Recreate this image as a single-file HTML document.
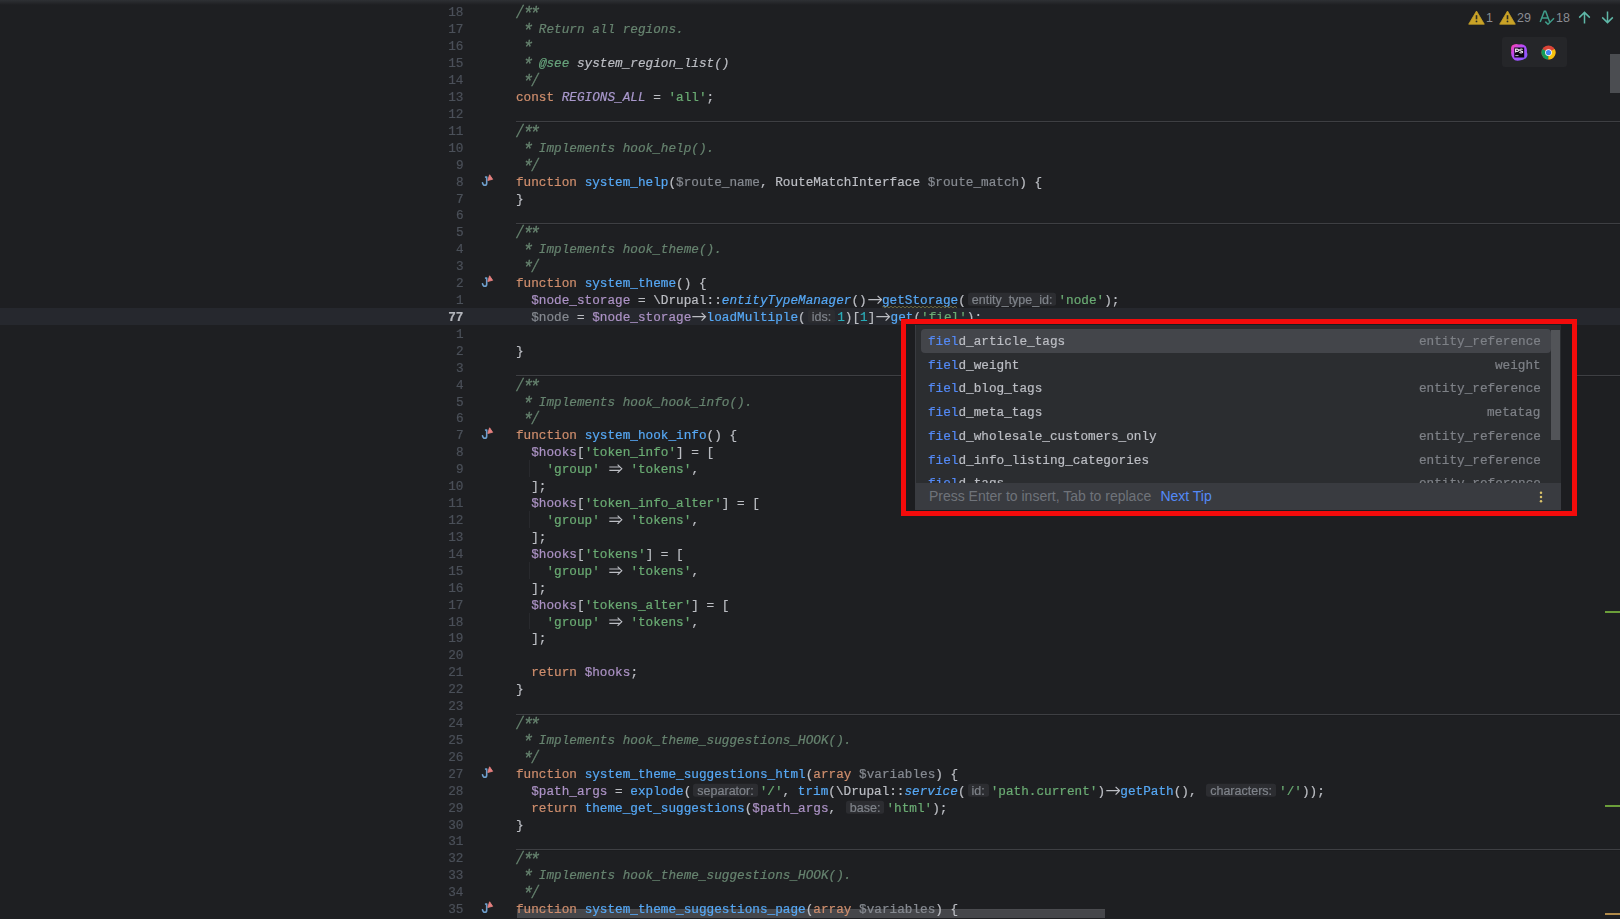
<!DOCTYPE html>
<html><head><meta charset="utf-8"><style>
*{box-sizing:border-box}
html,body{margin:0;padding:0}
body{width:1620px;height:919px;overflow:hidden;background:#1e1f22;position:relative;font-family:"Liberation Mono",monospace;}
.topsh{position:absolute;left:0;top:0;width:1620px;height:5px;background:linear-gradient(#2e3034,#1e1f22)}
.cur{position:absolute;left:0;width:1620px;height:16.92px;background:#26282e}
.ln{position:absolute;left:400px;width:63.5px;text-align:right;font-size:12.717px;line-height:16.92px;height:16.92px;color:#4b5059;white-space:pre;-webkit-text-stroke:0.2px currentColor;transform:translateY(1.8px) scaleY(1.06);transform-origin:0 11.84px;will-change:transform}
.lc{color:#b4b6bc;font-weight:bold}
.code{position:absolute;left:516.0px;font-size:12.717px;line-height:16.92px;height:16.92px;color:#bcbec4;white-space:pre;-webkit-text-stroke:0.2px currentColor;transform:translateY(1.8px) scaleY(1.06);transform-origin:0 11.84px;will-change:transform}
.sep{position:absolute;left:516.0px;width:1104.0px;height:1px;background:#3e3f43;box-shadow:0 1px 0 #1b1c1f}
.ig{position:absolute;left:528.76px;width:1px;height:16.92px;background:#28292d}
.gic{position:absolute;left:480px;height:16.92px;width:16px}
.gi{position:absolute;left:0;top:0}
.k{color:#cf8e6d}
.ast{display:inline-block;width:7.63px;text-align:center;transform-origin:50% 4.54px;transform:translateY(0.5px) scale(1.4)}
.sl{display:inline-block;width:7.63px;text-align:center;transform-origin:50% 6.52px;transform:translateY(0.55px) scaleY(1.3)}
.f{color:#56a8f5}
.fi{color:#56a8f5;font-style:italic}
.s{color:#6aab73}
.n{color:#2aacb8}
.d{color:#66836f;font-style:italic}
.dt{color:#67a37c;font-style:italic}
.dr{color:#bcbec4;font-style:italic}
.c{color:#a998cc;font-style:italic}
.v{color:#ad93c6}
.u{color:#868a91}
.ar{display:inline-block;width:15.26px;height:16.92px;vertical-align:top;position:relative}
.ar b{position:absolute;left:0;top:0;width:100%;height:16.92px;transform-origin:0 11.84px;transform:scaleY(0.94340)}
.ar svg{position:absolute;left:0;top:0}
.hint{display:inline-block;height:16.92px;vertical-align:top;position:relative;padding:0 2px}
.hint i{display:block;margin-top:0.4px;height:12.9px;background:#2c2d31;border-radius:2.5px;font-style:normal;font-family:"Liberation Sans",sans-serif;font-size:12.5px;line-height:14.3px;padding:0 4px;color:#7f838a;transform-origin:0 11.44px;transform:scaleY(0.94340)}
.redbox{position:absolute;left:901px;top:318.6px;width:675.5px;height:197.4px;border:5px solid #f40b0b}
.popshadow{position:absolute;left:906px;top:323.6px;width:665.5px;height:187.4px;background:#1c1d20}
.popup{position:absolute;left:915.4px;top:324.5px;width:645.6px;height:185.2px;background:#2b2d30;overflow:hidden;border-left:1px solid #393b40}
.plist{position:absolute;left:0;top:0;right:0;height:158px;overflow:hidden}
.psel{position:absolute;left:4.6px;top:4.5px;width:630px;height:23.8px;background:#43454a;border-radius:4px}
.pit{position:absolute;left:11.5px;height:23.7px;line-height:23.7px;font-size:12.717px;color:#bcbec4;white-space:pre;-webkit-text-stroke:0.2px currentColor;transform:translateY(1.5px) scaleY(1.06);transform-origin:0 15.22px;will-change:transform}
.pm{color:#548af7}
.pty{position:absolute;right:20.5px;height:23.7px;line-height:23.7px;font-size:12.717px;color:#7e8187;white-space:pre;-webkit-text-stroke:0.2px currentColor;transform:translateY(1.5px) scaleY(1.06);transform-origin:0 15.22px;will-change:transform}
.psb{position:absolute;left:634.6px;top:5.5px;width:9.5px;height:109.5px;background:#525458}
.pfoot{position:absolute;left:0;top:158px;right:0;bottom:0;background:#393b40;font-family:"Liberation Sans",sans-serif;font-size:14px;line-height:27px}
.pft{position:absolute;left:12.5px;top:0;color:#6f737a}
.pnt{position:absolute;left:244px;top:0;color:#548af7}
.pdots{position:absolute;left:622px;top:8px}
.stn{position:absolute;top:9.5px;font-family:"Liberation Sans",sans-serif;font-size:12.5px;line-height:17px;color:#8a8d93}
.brbox{position:absolute;left:1502px;top:37px;width:65px;height:30px;background:#252629;border-radius:3px}
</style></head>
<body>
<div class="topsh"></div>
<div style="position:absolute;left:516.8px;top:908.8px;width:588.4px;height:9px;background:#45464a;border-top:1px solid #4b4c50"></div><div class="sep" style="top:121.34px"></div><div class="sep" style="top:222.86px"></div><div class="sep" style="top:375.14px"></div><div class="sep" style="top:713.54px"></div><div class="sep" style="top:848.90px"></div><div class="ig" style="top:460.24px"></div><div class="ig" style="top:511.00px"></div><div class="ig" style="top:561.76px"></div><div class="ig" style="top:612.52px"></div><div class="ln" style="top:3.40px">18</div><div class="code" style="top:3.40px"><span class="d"><span class="sl">/</span><span class="ast">*</span><span class="ast">*</span></span></div><div class="ln" style="top:20.32px">17</div><div class="code" style="top:20.32px"><span class="d"> <span class="ast">*</span> Return all regions.</span></div><div class="ln" style="top:37.24px">16</div><div class="code" style="top:37.24px"><span class="d"> <span class="ast">*</span></span></div><div class="ln" style="top:54.16px">15</div><div class="code" style="top:54.16px"><span class="d"> <span class="ast">*</span> </span><span class="dt">@see</span><span class="d"> </span><span class="dr">system_region_list()</span></div><div class="ln" style="top:71.08px">14</div><div class="code" style="top:71.08px"><span class="d"> <span class="ast">*</span><span class="sl">/</span></span></div><div class="ln" style="top:88.00px">13</div><div class="code" style="top:88.00px"><span class="k">const</span> <span class="c">REGIONS_ALL</span> = <span class="s">'all'</span>;</div><div class="ln" style="top:104.92px">12</div><div class="ln" style="top:121.84px">11</div><div class="code" style="top:121.84px"><span class="d"><span class="sl">/</span><span class="ast">*</span><span class="ast">*</span></span></div><div class="ln" style="top:138.76px">10</div><div class="code" style="top:138.76px"><span class="d"> <span class="ast">*</span> Implements hook_help().</span></div><div class="ln" style="top:155.68px">9</div><div class="code" style="top:155.68px"><span class="d"> <span class="ast">*</span><span class="sl">/</span></span></div><div class="ln" style="top:172.60px">8</div><div class="gic" style="top:172.60px"><svg class="gi" width="16" height="17" viewBox="0 0 16 17"><path d="M5.6 4.1H6.7V10.2Q6.7 12.3 4.7 12.3Q3.1 12.3 2.5 9.8" fill="none" stroke="#6f9fcc" stroke-width="1.6" stroke-linecap="round" stroke-linejoin="round"/><path d="M9.6 1.8L12.6 6.3L7.8 7.4Z" fill="#e5807f" stroke="#e5807f" stroke-width="0.9" stroke-linejoin="round"/></svg></div><div class="code" style="top:172.60px"><span class="k">function</span> <span class="f">system_help</span>(<span class="u">$route_name</span>, RouteMatchInterface <span class="u">$route_match</span>) {</div><div class="ln" style="top:189.52px">7</div><div class="code" style="top:189.52px">}</div><div class="ln" style="top:206.44px">6</div><div class="ln" style="top:223.36px">5</div><div class="code" style="top:223.36px"><span class="d"><span class="sl">/</span><span class="ast">*</span><span class="ast">*</span></span></div><div class="ln" style="top:240.28px">4</div><div class="code" style="top:240.28px"><span class="d"> <span class="ast">*</span> Implements hook_theme().</span></div><div class="ln" style="top:257.20px">3</div><div class="code" style="top:257.20px"><span class="d"> <span class="ast">*</span><span class="sl">/</span></span></div><div class="ln" style="top:274.12px">2</div><div class="gic" style="top:274.12px"><svg class="gi" width="16" height="17" viewBox="0 0 16 17"><path d="M5.6 4.1H6.7V10.2Q6.7 12.3 4.7 12.3Q3.1 12.3 2.5 9.8" fill="none" stroke="#6f9fcc" stroke-width="1.6" stroke-linecap="round" stroke-linejoin="round"/><path d="M9.6 1.8L12.6 6.3L7.8 7.4Z" fill="#e5807f" stroke="#e5807f" stroke-width="0.9" stroke-linejoin="round"/></svg></div><div class="code" style="top:274.12px"><span class="k">function</span> <span class="f">system_theme</span>() {</div><div class="ln" style="top:291.04px">1</div><div class="code" style="top:291.04px">  <span class="v">$node_storage</span> = \Drupal::<span class="fi">entityTypeManager</span>()<span class="ar"><b><svg width="15.24" height="16" viewBox="0 0 15.24 16"><path d="M1.3 6.9H14.4M10.6 3L14.5 6.9L10.6 10.8" fill="none" stroke="#bcbec4" stroke-width="1.2"/></svg></b></span><span class="f wv">getStorage</span>(<span class="hint"><i>entity_type_id:</i></span><span class="s">'node'</span>);</div><div class="cur" style="top:307.96px"></div><div class="ln lc" style="top:307.96px">77</div><div class="code" style="top:307.96px">  <span class="u">$node</span> = <span class="v">$node_storage</span><span class="ar"><b><svg width="15.24" height="16" viewBox="0 0 15.24 16"><path d="M1.3 6.9H14.4M10.6 3L14.5 6.9L10.6 10.8" fill="none" stroke="#bcbec4" stroke-width="1.2"/></svg></b></span><span class="f">loadMultiple</span>(<span class="hint"><i>ids:</i></span><span class="n">1</span>)[<span class="n">1</span>]<span class="ar"><b><svg width="15.24" height="16" viewBox="0 0 15.24 16"><path d="M1.3 6.9H14.4M10.6 3L14.5 6.9L10.6 10.8" fill="none" stroke="#bcbec4" stroke-width="1.2"/></svg></b></span><span class="f">get</span>(<span class="s">'fiel'</span>);</div><div class="ln" style="top:324.88px">1</div><div class="ln" style="top:341.80px">2</div><div class="code" style="top:341.80px">}</div><div class="ln" style="top:358.72px">3</div><div class="ln" style="top:375.64px">4</div><div class="code" style="top:375.64px"><span class="d"><span class="sl">/</span><span class="ast">*</span><span class="ast">*</span></span></div><div class="ln" style="top:392.56px">5</div><div class="code" style="top:392.56px"><span class="d"> <span class="ast">*</span> Implements hook_hook_info().</span></div><div class="ln" style="top:409.48px">6</div><div class="code" style="top:409.48px"><span class="d"> <span class="ast">*</span><span class="sl">/</span></span></div><div class="ln" style="top:426.40px">7</div><div class="gic" style="top:426.40px"><svg class="gi" width="16" height="17" viewBox="0 0 16 17"><path d="M5.6 4.1H6.7V10.2Q6.7 12.3 4.7 12.3Q3.1 12.3 2.5 9.8" fill="none" stroke="#6f9fcc" stroke-width="1.6" stroke-linecap="round" stroke-linejoin="round"/><path d="M9.6 1.8L12.6 6.3L7.8 7.4Z" fill="#e5807f" stroke="#e5807f" stroke-width="0.9" stroke-linejoin="round"/></svg></div><div class="code" style="top:426.40px"><span class="k">function</span> <span class="f">system_hook_info</span>() {</div><div class="ln" style="top:443.32px">8</div><div class="code" style="top:443.32px">  <span class="v">$hooks</span>[<span class="s">'token_info'</span>] = [</div><div class="ln" style="top:460.24px">9</div><div class="code" style="top:460.24px">    <span class="s">'group'</span> <span class="ar"><b><svg width="15.24" height="16" viewBox="0 0 15.24 16"><path d="M1.3 5.2H11.8M1.3 8.6H11.8M9.6 2.8L13.8 6.9L9.6 11" fill="none" stroke="#bcbec4" stroke-width="1.15"/></svg></b></span> <span class="s">'tokens'</span>,</div><div class="ln" style="top:477.16px">10</div><div class="code" style="top:477.16px">  ];</div><div class="ln" style="top:494.08px">11</div><div class="code" style="top:494.08px">  <span class="v">$hooks</span>[<span class="s">'token_info_alter'</span>] = [</div><div class="ln" style="top:511.00px">12</div><div class="code" style="top:511.00px">    <span class="s">'group'</span> <span class="ar"><b><svg width="15.24" height="16" viewBox="0 0 15.24 16"><path d="M1.3 5.2H11.8M1.3 8.6H11.8M9.6 2.8L13.8 6.9L9.6 11" fill="none" stroke="#bcbec4" stroke-width="1.15"/></svg></b></span> <span class="s">'tokens'</span>,</div><div class="ln" style="top:527.92px">13</div><div class="code" style="top:527.92px">  ];</div><div class="ln" style="top:544.84px">14</div><div class="code" style="top:544.84px">  <span class="v">$hooks</span>[<span class="s">'tokens'</span>] = [</div><div class="ln" style="top:561.76px">15</div><div class="code" style="top:561.76px">    <span class="s">'group'</span> <span class="ar"><b><svg width="15.24" height="16" viewBox="0 0 15.24 16"><path d="M1.3 5.2H11.8M1.3 8.6H11.8M9.6 2.8L13.8 6.9L9.6 11" fill="none" stroke="#bcbec4" stroke-width="1.15"/></svg></b></span> <span class="s">'tokens'</span>,</div><div class="ln" style="top:578.68px">16</div><div class="code" style="top:578.68px">  ];</div><div class="ln" style="top:595.60px">17</div><div class="code" style="top:595.60px">  <span class="v">$hooks</span>[<span class="s">'tokens_alter'</span>] = [</div><div class="ln" style="top:612.52px">18</div><div class="code" style="top:612.52px">    <span class="s">'group'</span> <span class="ar"><b><svg width="15.24" height="16" viewBox="0 0 15.24 16"><path d="M1.3 5.2H11.8M1.3 8.6H11.8M9.6 2.8L13.8 6.9L9.6 11" fill="none" stroke="#bcbec4" stroke-width="1.15"/></svg></b></span> <span class="s">'tokens'</span>,</div><div class="ln" style="top:629.44px">19</div><div class="code" style="top:629.44px">  ];</div><div class="ln" style="top:646.36px">20</div><div class="ln" style="top:663.28px">21</div><div class="code" style="top:663.28px">  <span class="k">return</span> <span class="v">$hooks</span>;</div><div class="ln" style="top:680.20px">22</div><div class="code" style="top:680.20px">}</div><div class="ln" style="top:697.12px">23</div><div class="ln" style="top:714.04px">24</div><div class="code" style="top:714.04px"><span class="d"><span class="sl">/</span><span class="ast">*</span><span class="ast">*</span></span></div><div class="ln" style="top:730.96px">25</div><div class="code" style="top:730.96px"><span class="d"> <span class="ast">*</span> Implements hook_theme_suggestions_HOOK().</span></div><div class="ln" style="top:747.88px">26</div><div class="code" style="top:747.88px"><span class="d"> <span class="ast">*</span><span class="sl">/</span></span></div><div class="ln" style="top:764.80px">27</div><div class="gic" style="top:764.80px"><svg class="gi" width="16" height="17" viewBox="0 0 16 17"><path d="M5.6 4.1H6.7V10.2Q6.7 12.3 4.7 12.3Q3.1 12.3 2.5 9.8" fill="none" stroke="#6f9fcc" stroke-width="1.6" stroke-linecap="round" stroke-linejoin="round"/><path d="M9.6 1.8L12.6 6.3L7.8 7.4Z" fill="#e5807f" stroke="#e5807f" stroke-width="0.9" stroke-linejoin="round"/></svg></div><div class="code" style="top:764.80px"><span class="k">function</span> <span class="f">system_theme_suggestions_html</span>(<span class="k">array</span> <span class="u">$variables</span>) {</div><div class="ln" style="top:781.72px">28</div><div class="code" style="top:781.72px">  <span class="v">$path_args</span> = <span class="f">explode</span>(<span class="hint"><i>separator:</i></span><span class="s">'/'</span>, <span class="f">trim</span>(\Drupal::<span class="fi">service</span>(<span class="hint"><i>id:</i></span><span class="s">'path.current'</span>)<span class="ar"><b><svg width="15.24" height="16" viewBox="0 0 15.24 16"><path d="M1.3 6.9H14.4M10.6 3L14.5 6.9L10.6 10.8" fill="none" stroke="#bcbec4" stroke-width="1.2"/></svg></b></span><span class="f">getPath</span>(), <span class="hint" style="padding-right:3px"><i>characters:</i></span><span class="s">'/'</span>));</div><div class="ln" style="top:798.64px">29</div><div class="code" style="top:798.64px">  <span class="k">return</span> <span class="f">theme_get_suggestions</span>(<span class="v">$path_args</span>, <span class="hint"><i>base:</i></span><span class="s">'html'</span>);</div><div class="ln" style="top:815.56px">30</div><div class="code" style="top:815.56px">}</div><div class="ln" style="top:832.48px">31</div><div class="ln" style="top:849.40px">32</div><div class="code" style="top:849.40px"><span class="d"><span class="sl">/</span><span class="ast">*</span><span class="ast">*</span></span></div><div class="ln" style="top:866.32px">33</div><div class="code" style="top:866.32px"><span class="d"> <span class="ast">*</span> Implements hook_theme_suggestions_HOOK().</span></div><div class="ln" style="top:883.24px">34</div><div class="code" style="top:883.24px"><span class="d"> <span class="ast">*</span><span class="sl">/</span></span></div><div class="ln" style="top:900.16px">35</div><div class="gic" style="top:900.16px"><svg class="gi" width="16" height="17" viewBox="0 0 16 17"><path d="M5.6 4.1H6.7V10.2Q6.7 12.3 4.7 12.3Q3.1 12.3 2.5 9.8" fill="none" stroke="#6f9fcc" stroke-width="1.6" stroke-linecap="round" stroke-linejoin="round"/><path d="M9.6 1.8L12.6 6.3L7.8 7.4Z" fill="#e5807f" stroke="#e5807f" stroke-width="0.9" stroke-linejoin="round"/></svg></div><div class="code" style="top:900.16px"><span class="k">function</span> <span class="f">system_theme_suggestions_page</span>(<span class="k">array</span> <span class="u">$variables</span>) {</div><svg style="position:absolute;left:882.24px;top:305.84px" width="76.3" height="3" viewBox="0 0 76.3 3"><path d="M0 1.5 L1.0 0.3 L3.0 1.8 L5.0 0.3 L7.0 1.8 L9.0 0.3 L11.0 1.8 L13.0 0.3 L15.0 1.8 L17.0 0.3 L19.0 1.8 L21.0 0.3 L23.0 1.8 L25.0 0.3 L27.0 1.8 L29.0 0.3 L31.0 1.8 L33.0 0.3 L35.0 1.8 L37.0 0.3 L39.0 1.8 L41.0 0.3 L43.0 1.8 L45.0 0.3 L47.0 1.8 L49.0 0.3 L51.0 1.8 L53.0 0.3 L55.0 1.8 L57.0 0.3 L59.0 1.8 L61.0 0.3 L63.0 1.8 L65.0 0.3 L67.0 1.8 L69.0 0.3 L71.0 1.8 L73.0 0.3 L75.0 1.8" fill="none" stroke="#857d4a" stroke-width="0.8"/></svg><div class="redbox"></div><div class="popshadow"></div><div class="popup"><div class="plist"><div class="psel"></div><div class="pit" style="top:4.50px"><span class="pm">fiel</span>d_article_tags</div><div class="pty" style="top:4.50px">entity_reference</div><div class="pit" style="top:28.20px"><span class="pm">fiel</span>d_weight</div><div class="pty" style="top:28.20px">weight</div><div class="pit" style="top:51.90px"><span class="pm">fiel</span>d_blog_tags</div><div class="pty" style="top:51.90px">entity_reference</div><div class="pit" style="top:75.60px"><span class="pm">fiel</span>d_meta_tags</div><div class="pty" style="top:75.60px">metatag</div><div class="pit" style="top:99.30px"><span class="pm">fiel</span>d_wholesale_customers_only</div><div class="pty" style="top:99.30px">entity_reference</div><div class="pit" style="top:123.00px"><span class="pm">fiel</span>d_info_listing_categories</div><div class="pty" style="top:123.00px">entity_reference</div><div class="pit" style="top:146.70px"><span class="pm">fiel</span>d_tags</div><div class="pty" style="top:146.70px">entity_reference</div><div class="psb"></div></div><div class="pfoot"><span class="pft">Press Enter to insert, Tab to replace</span><span class="pnt">Next Tip</span><svg class="pdots" width="6" height="12" viewBox="0 0 6 12"><circle cx="3" cy="1.8" r="1.25" fill="#d9c26a"/><circle cx="3" cy="6" r="1.25" fill="#d9c26a"/><circle cx="3" cy="10.2" r="1.25" fill="#d9c26a"/></svg></div></div><svg style="position:absolute;left:1468px;top:10px" width="17" height="15" viewBox="0 0 17 15"><path d="M8.5 1L16.3 14.2H0.7Z" fill="#c9a227" stroke="#c9a227" stroke-width="0.8" stroke-linejoin="round"/><path d="M8.5 5.2V9.3" stroke="#2b2b22" stroke-width="1.6"/><circle cx="8.5" cy="11.4" r="0.9" fill="#2b2b22"/></svg><div class="stn" style="left:1486px">1</div><svg style="position:absolute;left:1499px;top:10px" width="17" height="15" viewBox="0 0 17 15"><path d="M8.5 1L16.3 14.2H0.7Z" fill="#c9a227" stroke="#c9a227" stroke-width="0.8" stroke-linejoin="round"/><path d="M8.5 5.2V9.3" stroke="#2b2b22" stroke-width="1.6"/><circle cx="8.5" cy="11.4" r="0.9" fill="#2b2b22"/></svg><div class="stn" style="left:1517px">29</div><svg style="position:absolute;left:1539px;top:9px" width="16" height="17" viewBox="0 0 16 17"><path d="M1.2 13L5.3 2.2H6.6L10.7 13M2.8 9H9.1" fill="none" stroke="#3e9d8a" stroke-width="1.5"/><path d="M6.3 12.6L9 15.2L15 9.2" fill="none" stroke="#3e9d8a" stroke-width="1.5"/></svg><div class="stn" style="left:1556px">18</div><svg style="position:absolute;left:1578px;top:11px" width="13" height="13" viewBox="0 0 13 13"><path d="M6.5 12.5V1.5M1.2 6.6L6.5 1.4L11.8 6.6" fill="none" stroke="#5fb8a8" stroke-width="1.5"/></svg><svg style="position:absolute;left:1601px;top:11px" width="13" height="13" viewBox="0 0 13 13"><path d="M6.5 0.5V11.5M1.2 6.4L6.5 11.6L11.8 6.4" fill="none" stroke="#5fb8a8" stroke-width="1.5"/></svg><div class="brbox"></div><svg style="position:absolute;left:1510px;top:43px" width="19" height="19" viewBox="0 0 19 19"><defs><linearGradient id="psg" x1="0" y1="0" x2="1" y2="1"><stop offset="0" stop-color="#ff3fa8"/><stop offset="0.45" stop-color="#b44dff"/><stop offset="1" stop-color="#7d5cff"/></linearGradient></defs><path d="M2 2.5Q5 0 9 1.5Q13 0.5 15.5 3Q17.5 6 16.8 9Q18.3 12.5 16.3 14.8Q13 17.8 9 17.5Q5 18.3 3 15.5Q0.5 12 1.3 8Q0.5 4.5 2 2.5Z" fill="url(#psg)"/><rect x="4.3" y="4.5" width="9.9" height="10" fill="#0a0610"/><path d="M5.6 9.6V6.1H7.3Q8.6 6.1 8.6 7.25Q8.6 8.4 7.3 8.4H5.6M12.6 6.5Q12.1 6 11.1 6Q9.6 6 9.6 7.1Q9.6 7.9 11.1 8.1Q12.7 8.3 12.7 9.1Q12.7 10 11.1 10Q10 10 9.4 9.4" fill="none" stroke="#f0e6f5" stroke-width="1.1"/><rect x="5.3" y="12.2" width="3.2" height="0.9" fill="#d8d0e0"/></svg><svg style="position:absolute;left:1541px;top:45px" width="15" height="15" viewBox="0 0 16 16"><circle cx="8" cy="8" r="7.5" fill="#db4437"/><path d="M8 8L1.5 11.75A7.5 7.5 0 0 0 8 15.5Z" fill="#0f9d58"/><path d="M8 8L8 15.5A7.5 7.5 0 0 0 14.5 4.25Z" fill="#f4c20d"/><path d="M8 8L1.5 11.75A7.5 7.5 0 0 1 1.5 4.25Z" fill="#0f9d58"/><circle cx="8" cy="8" r="3.6" fill="#fff"/><circle cx="8" cy="8" r="2.8" fill="#4285f4"/></svg><div style="position:absolute;left:1610px;top:53.5px;width:10px;height:39.5px;background:#4b4d51"></div><div style="position:absolute;left:1605px;top:611px;width:15px;height:2px;background:#6b9e3a"></div><div style="position:absolute;left:1605px;top:805px;width:15px;height:2px;background:#6b9e3a"></div><div style="position:absolute;left:1605px;top:913px;width:15px;height:2px;background:#b08a4a"></div>
</body></html>
